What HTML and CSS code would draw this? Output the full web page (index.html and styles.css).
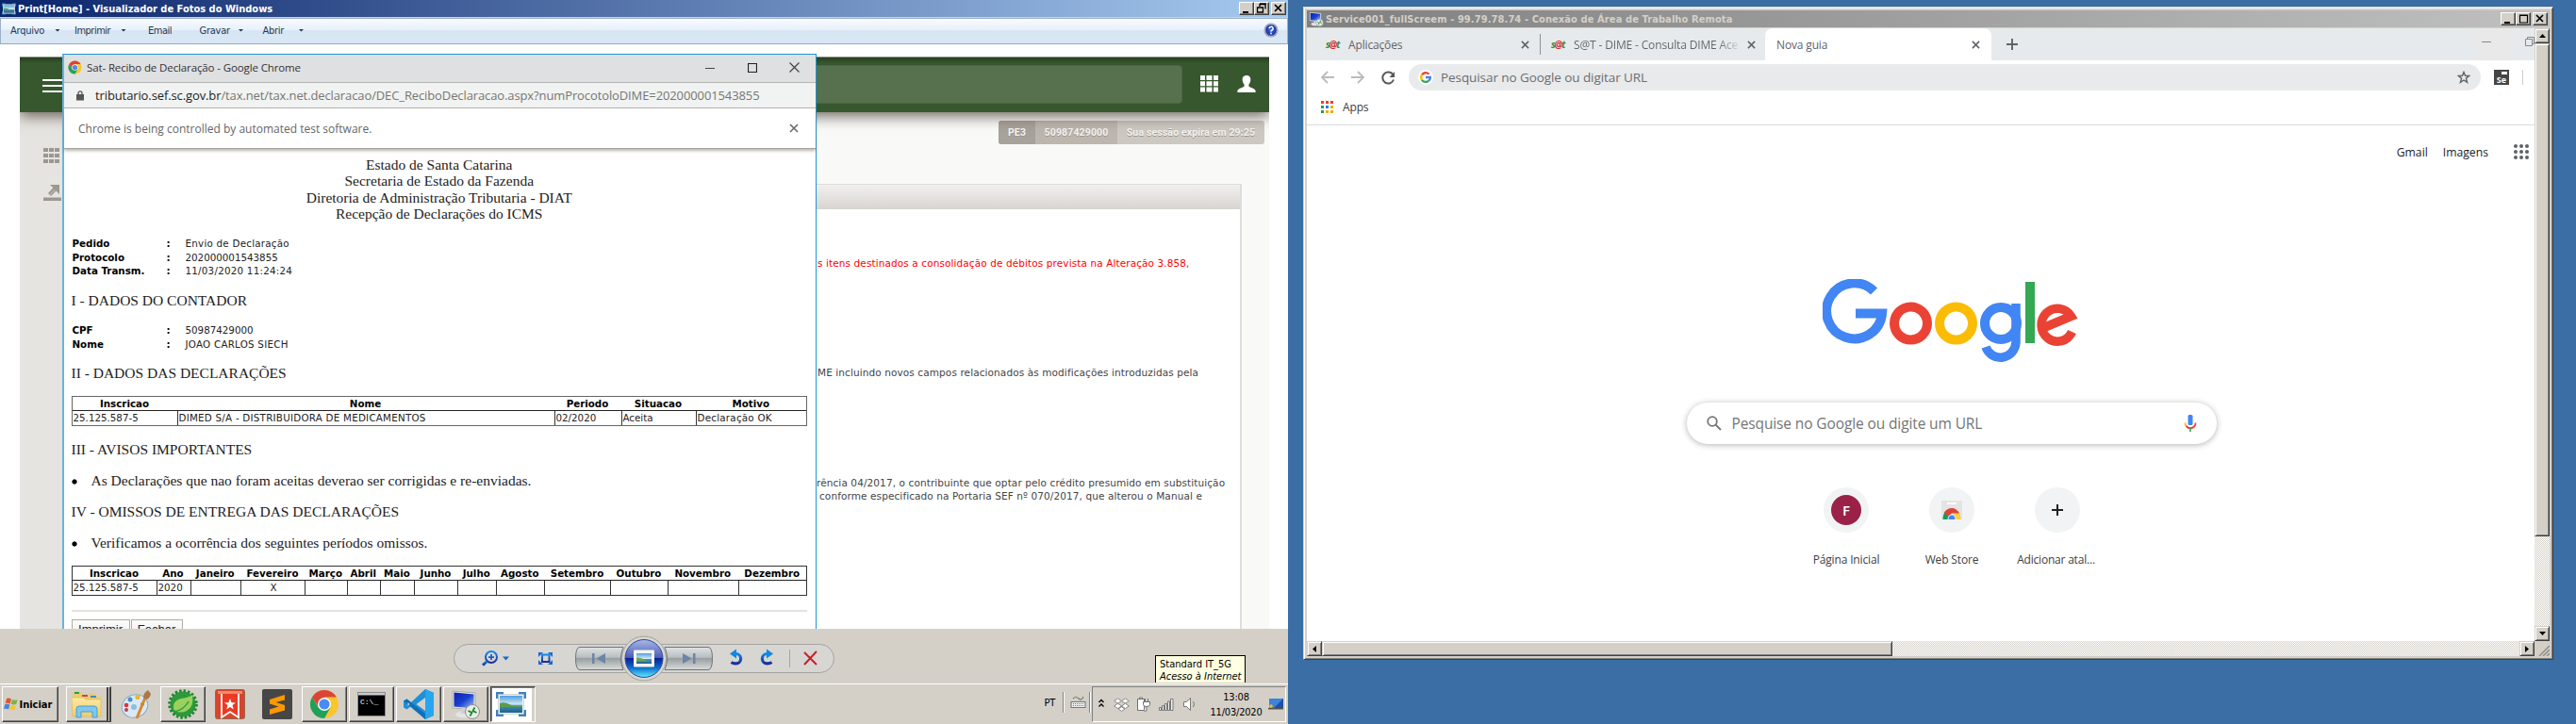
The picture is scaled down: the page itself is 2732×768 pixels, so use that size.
FILE: index.html
```html
<!DOCTYPE html>
<html lang="pt-BR">
<head>
<meta charset="utf-8">
<title>Desktop</title>
<link rel="stylesheet" href="styles.css">
</head>
<body>
<svg width="0" height="0" class="defs">
  <defs>
    <linearGradient id="screen" x1="0" y1="0" x2="1" y2="1"><stop offset="0" stop-color="#0a1fb0"/><stop offset=".5" stop-color="#1a3fd0"/><stop offset="1" stop-color="#9cc4f4"/></linearGradient>
    <linearGradient id="sky" x1="0" y1="0" x2="0" y2="1"><stop offset="0" stop-color="#4f9fe0"/><stop offset=".5" stop-color="#cfe8f6"/><stop offset=".6" stop-color="#3f8fb4"/><stop offset="1" stop-color="#1d5f93"/></linearGradient>
    <linearGradient id="folder" x1="0" y1="0" x2="0" y2="1"><stop offset="0" stop-color="#fbe9a0"/><stop offset="1" stop-color="#efcf6c"/></linearGradient>
    <linearGradient id="blueInk" x1="0" y1="0" x2="0" y2="1"><stop offset="0" stop-color="#1487e8"/><stop offset="1" stop-color="#1b2f9c"/></linearGradient>
    <radialGradient id="help"><stop offset="0" stop-color="#3f68e8"/><stop offset="1" stop-color="#16308f"/></radialGradient>
    <symbol id="chrome" viewBox="0 0 32 32">
      <circle cx="16" cy="16" r="15" fill="#fbc52d"/>
      <path d="M3 8.500A15 15 0 0 1 29 8.500H16L10 19.500Z" fill="#dc4437"/>
      <path d="M3 8.500A15 15 0 0 0 16 31L22.500 19.500H9.600Z" fill="#1fa15d"/>
      <circle cx="16" cy="16" r="7" fill="#fff"/><circle cx="16" cy="16" r="5.600" fill="#4a8af4"/>
    </symbol>
    <symbol id="rdp" viewBox="0 0 32 32">
      <path d="M2 2L26 4V22L2 20Z" fill="#e8e8ea" stroke="#aaa"/><path d="M3.500 3.500L24.500 5.500V20.500L3.500 18.500Z" fill="url(#screen)"/>
      <ellipse cx="14" cy="27" rx="9" ry="3.500" fill="#e4e4e6"/><path d="M11 20h6v6h-6z" fill="#d0d0d2"/>
      <circle cx="23" cy="24" r="7.500" fill="#e9ece9" stroke="#8d8d8d"/><path d="M18.500 23l4 2-2 3.500M27.500 25l-4-2 2-3.500" stroke="#178a2a" stroke-width="1.800" fill="none"/>
    </symbol>
    <symbol id="photo" viewBox="0 0 32 26">
      <path d="M1.500 7V1.500H8M24 1.500h6.500V7M30.500 19v5.500H24M8 24.500H1.500V19" fill="none" stroke="#3b83c0" stroke-width="3"/>
      <rect x="2.500" y="2.500" width="27" height="21" fill="#f2f2f0" stroke="#bbb" stroke-width=".6"/><rect x="4" y="4" width="24" height="18" fill="url(#sky)"/><path d="M4 12q5-2 10 1t14 2v1H4z" fill="#5d9a4a"/>
    </symbol>
    <symbol id="x" viewBox="0 0 10 10"><path d="M1 1L9 9M9 1L1 9" stroke="currentColor" stroke-width="1.700"/></symbol>
  </defs>
</svg>

<main class="desktop">
  <section class="screen-left">
    <header class="title-bar">
      <svg class="title-icon" width="15" height="13"><use href="#photo"/></svg>
      <span class="f-title">Print[Home] - Visualizador de Fotos do Windows</span>
      <div class="caption-buttons">
        <i class="cap"><svg width="14" height="12"><path d="M3 9h6v2H3z"/></svg></i>
        <i class="cap"><svg width="14" height="12"><path d="M5 1.500h6v5M5 1v3M2.500 5h6v5h-6zM2 5h7M5 1h7" fill="none" stroke="#000" stroke-width="1.300"/></svg></i>
        <i class="cap cap-gap"><svg width="14" height="12"><path d="M3 2l7 7M10 2L3 9" stroke="#000" stroke-width="1.700"/></svg></i>
      </div>
    </header>
    <nav class="viewer-menu">
      <span class="menu-item mi1"><b class="f-menu">Arquivo</b><i class="caret"></i></span>
      <span class="menu-item mi2"><b class="f-menu tight">Imprimir</b><i class="caret"></i></span>
      <span class="menu-item mi3"><b class="f-menu tight">Email</b></span>
      <span class="menu-item mi4"><b class="f-menu">Gravar</b><i class="caret"></i></span>
      <span class="menu-item mi5"><b class="f-menu">Abrir</b><i class="caret"></i></span>
      <svg class="help" width="16" height="16"><circle cx="8" cy="8" r="7.500" fill="#8d94a8"/><circle cx="8" cy="8" r="6.300" fill="url(#help)" stroke="#d6dbe8" stroke-width=".8"/><path d="M6 6.300a2.100 1.900 0 1 1 3 1.700q-1 .5-1 1.400" fill="none" stroke="#fff" stroke-width="1.500"/><circle cx="8" cy="11.500" r=".9" fill="#fff"/></svg>
    </nav>

    <div class="photo">
      <div class="page">
        <div class="green-bar">
          <i class="burger"></i>
          <i class="green-search"></i>
          <svg class="apps-white" width="20" height="18" fill="#fff"><path d="M0 0h5v5H0zM6.500 0h6v5h-6zM14 0h5v5h-5zM0 6.300h5v5H0zM6.500 6.300h6v5h-6zM14 6.300h5v5h-5zM0 12.600h5v5H0zM6.500 12.600h6v5h-6zM14 12.600h5v5h-5z"/></svg>
          <svg class="user-white" width="20" height="18" fill="#fff"><path d="M10 0c3.200 0 4.600 2.200 4.300 5-.2 2-1 3.600-1.900 4.700v1.700c1 1.300 6.900 2.300 7.200 4.800V18H.4v-1.800c.3-2.500 6.200-3.500 7.200-4.800V9.700C6.700 8.600 5.900 7 5.700 5 5.400 2.200 6.800 0 10 0z"/></svg>
        </div>
        <div class="page-body">
          <aside class="rail">
            <svg width="18" height="17" fill="#9c9790"><path d="M0 0h5v4H0zM6 0h5v4H6zM12 0h5v4h-5zM0 6h5v4H0zM6 6h5v4H6zM12 6h5v4h-5zM0 12h5v4H0zM6 12h5v4H6zM12 12h5v4h-5z"/></svg>
            <svg width="19" height="18" fill="#9c9790"><path d="M0 13.500h19V17H0zM7 0h10v10l-3.300-3.300L8 12 5 9l5.300-5.700z"/><path d="M6 12L12 5M8 13L14 6" stroke="#e6e4e0" stroke-width=".6"/></svg>
          </aside>
          <div class="page-main">
            <div class="session"><span class="s1"><b class="f-sess">PE3</b></span><span class="s2"><b class="f-sess">50987429000</b></span><span class="s3"><b class="f-sess">Sua sessão expira em 29:25</b></span></div>
            <div class="panel">
              <div class="panel-head"></div>
              <p class="note red"><span class="f-note">s itens destinados a consolidação de débitos prevista na Alteração 3.858,</span></p>
              <p class="note n2"><span class="f-note">ME incluindo novos campos relacionados às modificações introduzidas pela</span></p>
              <p class="note n3"><span class="f-note">rência 04/2017, o contribuinte que optar pelo crédito presumido em substituição</span></p>
              <p class="note n4"><span class="f-note">conforme especificado na Portaria SEF nº 070/2017, que alterou o Manual e</span></p>
            </div>
          </div>
        </div>
      </div>

      <article class="popup">
        <header class="popup-title">
          <svg width="15" height="15"><use href="#chrome"/></svg>
          <span class="f-pop">Sat- Recibo de Declaração - Google Chrome</span>
          <svg class="pop-min" width="10" height="10"><path d="M0 5.500h10" stroke="#444"/></svg>
          <svg class="pop-max" width="10" height="10"><path d="M.5.500h9v9h-9z" fill="none" stroke="#222" stroke-width="1.200"/></svg>
          <svg class="pop-close" width="11" height="11" viewBox="0 0 11 11"><path d="M.5.500l10 10M10.500.500l-10 10" stroke="#444" stroke-width="1.200"/></svg>
        </header>
        <div class="popup-url">
          <svg width="9" height="11"><path d="M0 4h8v6.500H0z" fill="#555"/><path d="M2 4.500V2.800a2 2 0 0 1 4 0v1.700" fill="none" stroke="#555" stroke-width="1.300"/></svg>
          <span class="f-url"><b>tributario.sef.sc.gov.br</b>/tax.net/tax.net.declaracao/DEC_ReciboDeclaracao.aspx?numProcotoloDIME=202000001543855</span>
        </div>
        <div class="popup-info"><span class="f-info">Chrome is being controlled by automated test software.</span><svg width="10" height="10" color="#6b6b66"><use href="#x"/></svg></div>
        <div class="receipt">
          <div class="r-head">Estado de Santa Catarina<br>Secretaria de Estado da Fazenda<br>Diretoria de Administração Tributaria - DIAT<br>Recepção de Declarações do ICMS</div>
          <dl class="r-info">
            <dt>Pedido</dt><dd>:</dd><dd class="word">Envio de Declaração</dd>
            <dt>Protocolo</dt><dd>:</dd><dd>202000001543855</dd>
            <dt>Data Transm.</dt><dd>:</dd><dd class="word">11/03/2020 11:24:24</dd>
          </dl>
          <h2>I - DADOS DO CONTADOR</h2>
          <dl class="r-info">
            <dt>CPF</dt><dd>:</dd><dd>50987429000</dd>
            <dt>Nome</dt><dd>:</dd><dd class="word">JOAO CARLOS SIECH</dd>
          </dl>
          <h2>II - DADOS DAS DECLARAÇÕES</h2>
          <div class="grid-table t1">
            <b>Inscricao</b><b>Nome</b><b>Periodo</b><b>Situacao</b><b>Motivo</b>
            <span>25.125.587-5</span><span class="word">DIMED S/A - DISTRIBUIDORA DE MEDICAMENTOS</span><span>02/2020</span><span>Aceita</span><span class="word">Declaração OK</span>
          </div>
          <h2 class="h-iii">III - AVISOS IMPORTANTES</h2>
          <p class="bullet">As Declarações que nao foram aceitas deverao ser corrigidas e re-enviadas.</p>
          <h2>IV - OMISSOS DE ENTREGA DAS DECLARAÇÕES</h2>
          <p class="bullet">Verificamos a ocorrência dos seguintes períodos omissos.</p>
          <div class="grid-table t2">
            <b>Inscricao</b><b>Ano</b><b>Janeiro</b><b>Fevereiro</b><b>Março</b><b>Abril</b><b>Maio</b><b>Junho</b><b>Julho</b><b>Agosto</b><b>Setembro</b><b>Outubro</b><b>Novembro</b><b>Dezembro</b>
            <span>25.125.587-5</span><span>2020</span><span></span><span class="mid">X</span><span></span><span></span><span></span><span></span><span></span><span></span><span></span><span></span><span></span><span></span>
          </div>
          <div class="rule"></div>
          <div class="buttons"><span class="btn b1">Imprimir</span><span class="btn b2">Fechar</span></div>
        </div>
      </article>
    </div>

    <div class="controls">
      <svg width="406" height="50" viewBox="480 673 406 50">
        <defs>
          <linearGradient id="nav" x1="0" y1="0" x2="0" y2="1"><stop offset="0" stop-color="#dfe2e2"/><stop offset=".45" stop-color="#b9bec0"/><stop offset=".5" stop-color="#999fa2"/><stop offset="1" stop-color="#d9dcdb"/></linearGradient>
          <linearGradient id="orb" x1="0" y1="0" x2="0" y2="1"><stop offset="0" stop-color="#a9b9e6"/><stop offset=".48" stop-color="#4a5cb8"/><stop offset=".5" stop-color="#0a1f96"/><stop offset=".75" stop-color="#0c6fcf"/><stop offset="1" stop-color="#5ff0ff"/></linearGradient>
        </defs>
        <rect x="481.500" y="683.500" width="403" height="30" rx="15" fill="#d7d6d2" stroke="#a3a3a1"/>
        <circle cx="683" cy="698.500" r="23.500" fill="#d7d6d2" stroke="#a3a3a1"/>
        <path d="M615 686.500h46q-5 12 0 24h-46q-4.500 0-4.500-12t4.500-12zM751 686.500h-46q5 12 0 24h46q4.500 0 4.500-12t-4.500-12z" fill="url(#nav)" stroke="#6f7476"/>
        <circle cx="683" cy="698.500" r="20" fill="url(#orb)" stroke="#33479c"/>
        <rect x="672" y="689.500" width="22" height="18" rx="1" fill="#f6f3f0"/><rect x="675" y="693" width="16" height="11" fill="url(#sky)"/><path d="M675 697.500q4-.5 8 2t8 1v1h-16z" fill="#6ea35c"/>
        <path d="M628 693h2.500v11H628zM642 693v11l-9.500-5.500zM737.500 693h-2.500v11h2.500zM724 693v11l9.500-5.500z" fill="#6b84a8"/>
        <g stroke="url(#blueInk)" fill="none" stroke-width="2"><circle cx="521" cy="697" r="6"/><path d="M518 697.100h6M521 694v6" stroke="#1a5ec4" stroke-width="1.800"/><path d="M516.500 701.500l-4.500 4" stroke-width="3"/>
        <path d="M575 694.500h7.500v7.500H575z"/></g>
        <path d="M571 697v-5h5l-1.500 1.500-2 2zM586 697v-5h-5l1.500 1.500 2 2zM571 700v5h5l-1.500-1.500-2-2zM586 700v5h-5l1.500-1.500 2-2z" fill="#2168cc"/>
        <path d="M533 696.500h7l-3.500 4z" fill="#1c64c8"/>
        <path d="M779 693.500h1.500a5 5 0 0 1 0 10.300q-3 .1-5-1.300" stroke="url(#blueInk)" stroke-width="3.200" fill="none"/><path d="M774 693.500l7-5v10z" fill="#1487e0"/>
        <path d="M815 693.500h-1.500a5 5 0 0 0 0 10.300q3 .1 5-1.300" stroke="url(#blueInk)" stroke-width="3.200" fill="none"/><path d="M820 693.500l-7-5v10z" fill="#1487e0"/>
        <path d="M837.500 689v19" stroke="#a6a6a4"/>
        <path d="M853 692l13 13M866 691l-13 14" stroke="#c8202c" stroke-width="2"/>
      </svg>
    </div>

    <footer class="taskbar">
      <div class="start"><svg width="16" height="14" viewBox="0 0 16 14"><path d="M3 1q2.500-1 5 .5L6.700 6.500q-2.500-1.500-5-.4z" fill="#e5562a"/><path d="M9 2q2.700 1.300 5.600.2L13.200 7q-3 1-5.500-.3z" fill="#78b63c"/><path d="M1.400 7.100q2.500-1 5 .5L5 12.500q-2.400-1.400-5-.4z" fill="#4a83d8"/><path d="M7.400 8q2.700 1.300 5.500.2L11.500 13q-3 1-5.500-.4z" fill="#f7c432"/></svg><b class="f-start">Iniciar</b></div>
      <div class="task up stack"><svg width="32" height="30" viewBox="0 0 32 30"><path d="M1 5V2h9l2 3h6V3h8l1 4h4v20H1z" fill="#e9cd73"/><path d="M3 2h5v2H3z" fill="#2a9e3c"/><path d="M11 5h6v2h-6z" fill="#d8423a"/><path d="M20 6h6v2h-6z" fill="#3a8cd0"/><path d="M0 8h13l2 2h16v18H1z" fill="url(#folder)" stroke="#d6b555" stroke-width=".6"/><path d="M5 29v-9q0-3 3-3h16q3 0 3 3v9h-5v-6H10v6z" fill="#7fc7ec" stroke="#4b9fd0"/></svg></div>
      <div class="task"><svg width="32" height="32"><ellipse cx="15" cy="18" rx="14" ry="12" fill="#d9e8f4" stroke="#8aa9c4" transform="rotate(-20 15 18)"/><circle cx="6" cy="17" r="2.300" fill="#d33"/><circle cx="10" cy="11" r="2.500" fill="#4b8ed0"/><circle cx="18" cy="8.500" r="2.600" fill="#e8b735"/><circle cx="6" cy="22" r="2" fill="#c2413a"/><circle cx="14" cy="19" r="3" fill="#8bbde4"/><circle cx="23" cy="16" r="2" fill="#54a24a"/><path d="M17 31L26 9" stroke="#d9862e" stroke-width="3"/><path d="M24 9q0-5 5-8l3 4q-1 5-5 6z" fill="#a97845"/></svg></div>
      <div class="task up"><svg width="32" height="32"><circle cx="16" cy="16" r="13.500" fill="#2c9a3b"/><circle cx="16" cy="16" r="14.300" fill="none" stroke="#238432" stroke-width="3" stroke-dasharray="2.500 2"/><path d="M6 21q-1-9 8-11 8-1 12-4 2 13-6 17-7 3-12 0z" fill="#9bd05c"/><path d="M7 24q10-2 15-11" stroke="#2c9a3b" stroke-width="1.500" fill="none"/></svg></div>
      <div class="task"><svg width="32" height="32"><rect x=".5" y=".5" width="31" height="31" rx="2" fill="#d9452b" stroke="#8e6a50"/><path d="M3 2h26v3H3z" fill="#f08a68"/><path d="M7 5h18v25l-9-6-9 6z" fill="#ea3a25"/><path d="M7 5v25l9-6 9 6V5" fill="none" stroke="#fff" stroke-width="1.800"/><path d="M16 10l1.600 4.200 4.400.2-3.500 2.700 1.200 4.300-3.700-2.500-3.700 2.500 1.200-4.300-3.500-2.700 4.400-.2z" fill="#fff"/></svg></div>
      <div class="task"><svg width="32" height="32"><rect width="32" height="32" rx="2" fill="#464646"/><path d="M8 11l16-5v5.500L14.500 14 24 17v5.500L8 27v-5.500l9.500-3L8 15.500z" fill="#ff9800"/></svg></div>
      <div class="task up"><svg width="32" height="32"><use href="#chrome"/></svg></div>
      <div class="task up"><svg class="cmd" width="30" height="26"><rect x=".5" y=".5" width="29" height="25" fill="#000" stroke="#8a8a8a"/><rect x="1" y="1" width="28" height="2.500" fill="#c8ccd2"/><text x="3" y="13" class="cmd-text">C:\_</text></svg></div>
      <div class="task up"><svg width="32" height="32"><path d="M23 0l9 4v24l-9 4L8 18 3.500 21.500 0 19.500V12.500L3.500 10.500 8 14z" fill="#1f8fd6"/><path d="M23 9v14l-9.500-7z" fill="#d4d0c8"/><path d="M0 12.500L3.500 10.500 23 26v6z" fill="#0f6fb8"/><path d="M23 0l9 4v24l-9 4z" fill="#27a5ee"/><path d="M4.500 14v4l2-2z" fill="#d4d0c8"/></svg></div>
      <div class="task up"><svg width="32" height="32"><use href="#rdp"/></svg></div>
      <div class="task down stack"><svg width="32" height="26"><use href="#photo"/></svg></div>

      <div class="tray-left"><span class="f-menu">PT</span><i class="vr"></i>
        <svg width="17" height="16" fill="none" stroke="#777" stroke-width="1.100"><path d="M1 7.500h15v6H1z" fill="#eee"/><path d="M3 9.500h11M3 11.500h11" stroke-dasharray="1 1"/><path d="M3 4q3-3 6 0t5-2"/></svg><i class="vr"></i></div>
      <div class="tray">
        <svg class="chev" width="6" height="10" fill="none" stroke="#000" stroke-width="1.300"><path d="M.5 4L3 1.500 5.500 4M.5 8.500L3 6l2.500 2.500"/></svg>
        <svg width="17" height="15" fill="#fff" stroke="#888" stroke-width="1"><path d="M4.500 1L8.500 3.500 4.500 6.200.7 3.500zM12.500 1l3.800 2.500-3.800 2.700-4-2.700zM4.500 6.200L8.500 9 4.500 11.500.7 9zM12.500 6.200L16.300 9l-3.800 2.500-4-2.500zM5 12l3.500-2.200L12 12l-3.500 2.400z"/></svg>
        <svg class="plug" width="16" height="16" fill="#fff" stroke="#6f6f6f"><path d="M1.500 2.500h7v12h-7zM3.500 1h3v1.500h-3z"/><path d="M7.500 5.500h7v3q0 2-3.500 2t-3.500-2zM9.500 5V2M12.500 5V2M11 10.500V15H8"/></svg>
        <svg class="bars" width="16" height="13" fill="#f4f4f4" stroke="#777"><path d="M.5 9.500h2v3h-2zM3.500 7.500h2v5h-2zM6.500 5.500h2v7h-2zM9.500 3h2v9.500h-2zM12.500.5h2.500v12h-2.500z"/></svg>
        <svg class="vol" width="15" height="16" fill="#fff" stroke="#777"><path d="M1.500 5.500h3l4-4v13l-4-4h-3z"/><path d="M11.500 5q2 3 0 6" fill="none"/></svg>
        <div class="clock"><span class="f-clock">13:08</span><span class="f-clock">11/03/2020</span></div>
        <svg width="16" height="14"><rect x="1" y="1" width="15" height="10" fill="#1e50a8"/><path d="M1 1h15L6 11H1z" fill="#3d83dc"/><path d="M0 11h16v1.500H0z" fill="#555"/><circle cx="3" cy="9" r="1.800" fill="#f0c030"/></svg>
      </div>
    </footer>
    <div class="tip"><span class="f-tip">Standard IT_5G</span><i class="f-tip">Acesso à Internet</i></div>
  </section>

  <section class="remote">
    <header class="remote-title">
      <svg width="16" height="16"><use href="#rdp"/></svg>
      <span class="f-rtitle">Service001_fullScreem - 99.79.78.74 - Conexão de Área de Trabalho Remota</span>
      <div class="caption-buttons">
        <i class="cap"><svg width="14" height="12"><path d="M3 9h6v2H3z"/></svg></i>
        <i class="cap"><svg width="14" height="12"><path d="M3.500 2h8v8h-8zM3 2.500h9" fill="none" stroke="#000" stroke-width="1.200"/></svg></i>
        <i class="cap cap-gap"><svg width="14" height="12"><path d="M3 2l7 7M10 2L3 9" stroke="#000" stroke-width="1.700"/></svg></i>
      </div>
    </header>
    <div class="remote-body">
      <div class="browser">
        <div class="tabs">
          <div class="tab ta"><span class="sat">s<em>@</em>t</span><span class="f-tab">Aplicações</span><svg width="9" height="9" color="#5f6368"><use href="#x"/></svg></div>
          <div class="tab tb"><span class="sat">s<em>@</em>t</span><span class="f-tab fade">S@T - DIME - Consulta DIME Ace</span><svg width="9" height="9" color="#5f6368"><use href="#x"/></svg></div>
          <div class="tab tc"><span class="f-tab">Nova guia</span><svg width="9" height="9" color="#5f6368"><use href="#x"/></svg></div>
          <svg class="new-tab" width="12" height="12"><path d="M6 0v12M0 6h12" stroke="#5f6368" stroke-width="1.900"/></svg>
          <div class="min-zone"><i></i></div>
          <svg class="restore" width="10" height="10" fill="none" stroke="#85888c"><path d="M.5 2.500h7v7h-7zM2.500 2.500v-2h7v7h-2"/></svg>
        </div>
        <div class="toolbar">
          <svg class="nav-i" width="14" height="14" fill="none" stroke="#babcbe" stroke-width="1.800"><path d="M14 7H1M7 1L1 7l6 6"/></svg>
          <svg class="nav-i" width="14" height="14" fill="none" stroke="#babcbe" stroke-width="1.800"><path d="M0 7h13M7 1l6 6-6 6"/></svg>
          <svg class="nav-i" width="15" height="15" fill="none" stroke="#55585c" stroke-width="2"><path d="M12.500 4.500A6 6 0 1 0 13 9.500"/><path d="M14 1v6H8.500z" fill="#55585c" stroke="none"/></svg>
          <div class="omni"><svg width="16" height="16" viewBox="0 0 16 16" fill="none" stroke-width="2.300"><circle cx="8" cy="8" r="8" fill="#fff"/><path d="M4 5.400A4.800 4.800 0 0 1 11.500 4.700" stroke="#ea4335"/><path d="M4.100 5.200a4.900 4.900 0 0 0 0 5.700" stroke="#fbbc05"/><path d="M4 10.800a4.800 4.800 0 0 0 7.200.9" stroke="#34a853"/><path d="M8 8h4.900q0 2.300-1.600 3.700" stroke="#4285f4"/></svg>
            <span class="f-omni">Pesquisar no Google ou digitar URL</span>
            <svg class="star" width="14" height="14" fill="none" stroke="#5f6368" stroke-width="1.400"><path d="M7 1.500l1.500 3.800 4.200.2-3.300 2.600 1.200 4.200L7 10l-3.600 2.300 1.200-4.200L1.300 5.500l4.200-.2z"/></svg></div>
          <div class="se"><i></i>Se</div>
          <i class="tool-div"></i>
        </div>
        <div class="bookmarks"><svg width="13" height="13"><path d="M0 0h3v3H0zM5 0h3v3H5zM10 0h3v3h-3z" fill="#f23a2f"/><path d="M0 5h3v3H0z" fill="#2c9a4b"/><path d="M5 5h3v3H5z" fill="#1f82f0"/><path d="M10 5h3v3h-3zM5 10h3v3H5zM10 10h3v3h-3z" fill="#f7a90a"/><path d="M0 10h3v3H0z" fill="#2c9a4b"/></svg><span class="f-tab dark">Apps</span></div>
        <div class="ntp">
          <div class="ntp-top"><span class="f-gm">Gmail</span><span class="f-gm">Imagens</span>
            <svg width="16" height="16" fill="#5f6368"><circle cx="2" cy="2" r="2"/><circle cx="8" cy="2" r="2"/><circle cx="14" cy="2" r="2"/><circle cx="2" cy="8" r="2"/><circle cx="8" cy="8" r="2"/><circle cx="14" cy="8" r="2"/><circle cx="2" cy="14" r="2"/><circle cx="8" cy="14" r="2"/><circle cx="14" cy="14" r="2"/></svg></div>
          <svg class="logo" width="272" height="92" viewBox="0 0 272 92" fill="none" stroke-width="10" role="img" aria-label="Google">
            <path d="M54.500 13A29.500 29.500 0 1 0 63 36.500H35" stroke="#4285f4" stroke-width="10"/>
            <circle cx="93.500" cy="47" r="17.500" stroke="#ea4335"/>
            <circle cx="141.500" cy="47" r="17.500" stroke="#fbbc05"/>
            <circle cx="189" cy="47" r="17" stroke="#4285f4"/>
            <path d="M205 26v41a16.500 17 0 0 1-32 5" stroke="#4285f4" stroke-width="9.500"/>
            <path d="M220 3v65" stroke="#34a853"/>
            <path d="M264.500 56A17 17.500 0 1 1 263.500 39.500L236 51" stroke="#ea4335" stroke-width="9.500"/>
          </svg>
          <div class="search"><svg width="16" height="16" fill="none" stroke="#757575" stroke-width="1.800"><circle cx="6" cy="6" r="4.800"/><path d="M9.500 9.500l5.500 5.500"/></svg><span class="f-search">Pesquise no Google ou digite um URL</span>
            <svg width="14" height="18" viewBox="0 0 14 18"><rect x="4.500" y="0" width="5" height="11" rx="1.500" fill="#4285f4"/><path d="M1.500 8.500Q1.500 11 3 12.500" stroke="#fbbc05" stroke-width="1.800" fill="none"/><path d="M2.500 12q4.500 4.500 9 0 1-1.300 1-3.500" stroke="#ea4335" stroke-width="1.800" fill="none"/><path d="M7 14v4" stroke="#34a853" stroke-width="1.600"/></svg></div>
          <div class="tiles">
            <div class="tile"><i><b>F</b></i><span class="f-tile">Página Inicial</span></div>
            <div class="tile"><i><svg width="22" height="22"><path d="M0 1h22v20H0z" fill="#e4e4e4"/><path d="M6 4h10" stroke="#fff" stroke-width="2"/><path d="M1.500 21a9.500 12 0 0 1 3-9l6.500 5v4z" fill="#0f9d58"/><path d="M20.500 21q0-6-3-9L11 17v4z" fill="#ffcd40"/><path d="M3 13.500Q6 9 11 9t8 5.500h-8L7 18z" fill="#db4437"/><path d="M6.500 21a4.500 5.500 0 0 1 9 0z" fill="#f1f1f1"/><path d="M7.500 21a3.500 4.500 0 0 1 7 0z" fill="#4285f4"/></svg></i><span class="f-tile">Web Store</span></div>
            <div class="tile"><i><svg width="12" height="12"><path d="M6 0v12M0 6h12" stroke="#202124" stroke-width="2"/></svg></i><span class="f-tile add">Adicionar atal...</span></div>
          </div>
        </div>
      </div>
      <div class="vscroll"><i class="sb"><svg width="7" height="4"><path d="M0 4h7L3.500 0z"/></svg></i><i class="vthumb"></i><i class="sb end"><svg width="7" height="4"><path d="M0 0h7L3.500 4z"/></svg></i></div>
      <div class="hscroll"><i class="sb"><svg width="4" height="7"><path d="M4 0v7L0 3.500z"/></svg></i><i class="hthumb"></i><i class="sb end"><svg width="4" height="7"><path d="M0 0v7l4-3.500z"/></svg></i></div>
      <svg class="grip" width="16" height="16" stroke="#8a867e" stroke-width="1.300"><path d="M5 16L16 5M9 16l7-7M13 16l3-3"/></svg>
    </div>
  </section>
</main>
</body>
</html>
```
FILE: styles.css
```css
* { box-sizing: border-box; }
body { margin: 0; background: #3a6ea5; font-family: "DejaVu Sans Condensed", "DejaVu Sans", sans-serif; font-size: 11px; color: #000; }
i, em { font-style: normal; }
span, b { white-space: pre; }
svg { flex: none; display: block; }
.defs { position: absolute; }
.desktop { position: relative; width: 2732px; height: 768px; overflow: hidden; }

/* type styles */
.f-title, .f-rtitle, .f-start { font: bold 11px "DejaVu Sans Condensed", "DejaVu Sans", sans-serif; }
.f-rtitle { letter-spacing: .1px; }
.f-menu, .f-clock, .f-tip { font: 11px "DejaVu Sans Condensed", "DejaVu Sans", sans-serif; }
.f-menu { letter-spacing: -.25px; }
.tight { letter-spacing: -.5px; }
.f-clock { letter-spacing: -.2px; }
.f-tip { letter-spacing: 0; }
.f-note { font: 10.500px "DejaVu Sans", sans-serif; letter-spacing: .1px; }
.f-sess { font: bold 10.500px Roboto, sans-serif; letter-spacing: .15px; }
.f-pop { font: 11.500px "Open Sans", sans-serif; letter-spacing: -.12px; }
.f-url { font: 13px "Open Sans", sans-serif; letter-spacing: -.11px; }
.f-info { font: 12px "Open Sans", sans-serif; }
.f-tab, .f-tile { font: 12px "Open Sans", sans-serif; letter-spacing: -.15px; }
.f-omni { font: 13.500px "Open Sans", sans-serif; letter-spacing: -.08px; }
.f-gm { font: 12.200px "Open Sans", sans-serif; }
.f-search { font: 15.500px "Open Sans", sans-serif; letter-spacing: -.12px; }

/* left monitor */
.screen-left { position: relative; display: flex; flex-direction: column; width: 1366px; height: 768px; background: #d4d0c8; }
.title-bar { display: flex; align-items: center; height: 18px; padding-left: 2px; background: linear-gradient(90deg, #0a246a, #a6caf0); color: #fff; }
.title-icon { margin-right: 2px; }
.caption-buttons { display: flex; margin-left: auto; padding-right: 2px; }
.cap { width: 16px; height: 14px; background: #d4d0c8; border: 1px solid; border-color: #fff #404040 #404040 #fff; box-shadow: inset -1px -1px #808080; }
.cap-gap { margin-left: 2px; }
.viewer-menu { display: flex; align-items: center; height: 28px; margin-top: 1px; padding: 0 9px 2px 0; border: 1px solid #9db0c8; border-bottom: 1px solid #8fa9c6; background: linear-gradient(#f8fbff 0, #e6f0fa 12px, #d8e5f3 12px, #dae7f5 100%); color: #1e395b; }
.menu-item { display: flex; align-items: center; justify-content: space-between; }
.menu-item b { font-weight: normal; }
.caret { width: 6px; height: 3px; background: #1e395b; clip-path: polygon(0 0, 100% 0, 50% 100%); }
.mi1 { width: 53px; margin-left: 10px; }
.mi2 { width: 55px; margin-left: 15px; }
.mi3 { width: 25px; margin-left: 23px; }
.mi4 { width: 47px; margin-left: 29.500px; }
.mi5 { width: 44px; margin-left: 20px; }
.help { margin-left: auto; margin-top: -1px; }

.photo { position: relative; height: 620px; overflow: hidden; background: #fff; padding: 13px 20px 0 21px; }
.page { height: 100%; display: flex; flex-direction: column; background: #f9f9f7; }
.green-bar { position: relative; display: flex; align-items: center; height: 59px; border-top: 1px solid #8b8f84; background: linear-gradient(#29401f 0, #37572f 6px); box-shadow: 0 4px 14px rgba(60, 50, 40, .75); clip-path: inset(0 0 -30px 0); padding: 0 14px 0 24px; }
.burger { width: 24px; height: 14px; margin-top: 2px; border: solid #fff; border-width: 2px 0; background: linear-gradient(#fff, #fff) 0 4px / 100% 2px no-repeat; }
.green-search { height: 41px; flex: 1; margin-right: 19px; margin-bottom: 2px; border-radius: 4px; background: #57704d; border: 1px solid #4b6643; }
.apps-white { margin-bottom: 2px; }
.user-white { margin: 0 0 2px 19px; }
.page-body { flex: 1; display: flex; }
.rail { width: 46px; background: #e6e4e0; padding: 38px 0 0 25px; display: flex; flex-direction: column; gap: 22px; }
.page-main { flex: 1; display: flex; flex-direction: column; align-items: flex-end; padding-top: 9px; }
.session { display: flex; height: 25px; margin-right: 5px; border-radius: 3px; overflow: hidden; background: #cdc8c2; color: #f5f3f0; line-height: 25px; }
.session span { display: flex; align-items: center; justify-content: center; text-shadow: 0 1px #9b958e; }
.s1 { width: 39px; background: #a7a29b; }
.s2 { width: 87px; background: #bdb6af; }
.s3 { width: 156px; }
.panel { flex: 1; width: 800px; margin: 42px 29px 0 0; border: 1px solid #deddd9; border-width: 1px 2px 0; background: #fff; padding-left: 348px; }
.panel-head { height: 26px; margin-left: -348px; background: linear-gradient(#f1f0ee, #d8d5d0); }
.note { margin: 0; height: 15px; line-height: 15px; color: #444; white-space: nowrap; }
.red { margin-top: 50px; color: #f00; }
.n2 { margin-top: 101px; }
.n3 { margin: 102px 0 0 -1px; height: 14px; }
.n4 { padding-left: 2px; }

/* pop-up browser window */
.popup { position: absolute; z-index: 2; left: 66px; top: 10px; width: 800px; height: 625px; background: #fff; border: 1px solid #1c97d5; border-left: 2px solid #68b4de; }
.popup-title { display: flex; align-items: center; height: 30px; background: #dfe0e2; border-bottom: 1px solid #b5b5b3; padding: 0 17px 2px 4px; }
.popup-title span { margin-left: 5px; color: #333; }
.pop-min { margin-left: auto; }
.pop-max { margin-left: 35px; }
.pop-close { margin-left: 34px; }
.popup-url { display: flex; align-items: center; height: 27px; background: #f1f3f2; border-bottom: 1px solid #b5b5b3; padding-left: 13px; color: #77756f; }
.popup-url span { margin-left: 11px; }
.popup-url b { font-weight: normal; color: #222; }
.popup-info { display: flex; align-items: center; justify-content: space-between; height: 43px; padding: 0 18px 0 15px; color: #666; border-bottom: 1px solid #aaa49e; box-shadow: 0 2px 3px rgba(120, 110, 100, .5); }
.receipt { padding: 7.500px 9px 0 7.500px; font: 10.300px/14.650px "DejaVu Sans", sans-serif; color: #222; }
.r-head, h2, .bullet { font: 15.500px/17.500px "Liberation Serif", serif; }
.r-head { height: 70px; text-align: center; }
.r-info { display: grid; grid-template-columns: 100px 20px 1fr; grid-auto-rows: 14.650px; margin: 15.600px 0 0; padding-left: 1px; }
dd, dt { margin: 0; white-space: nowrap; }
.word { letter-spacing: .25px; }
dt, .r-info dd:nth-of-type(odd) { font-weight: bold; color: #000; }
h2 { margin: 14.600px 0 0; height: 18px; font-weight: normal; }
.h-iii { margin-top: 15.600px; }
.bullet { margin: 15.500px 0 0; height: 18px; padding-left: 21px; background: radial-gradient(circle, #000 2.200px, transparent 3px) 0 7px / 6px 6px no-repeat; }
.grid-table { display: grid; grid-template-rows: 15px 15px; margin-top: 15px; border: 1px solid #333; height: 32px; }
.grid-table b { color: #000; border-bottom: 1px solid #222; display: flex; justify-content: center; }
.grid-table span { border-left: 1px solid #333; padding-left: 1px; }
.grid-table span:nth-of-type(1) { border-left: 0; }
.grid-table .mid { text-align: center; }
.t1 { grid-template-columns: 111px 400px 71px 79px 1fr; border-color: #666; }
.t2 { grid-template-columns: 89px 36px 53.500px 68px 44.500px 35.500px 36px 46px 40.500px 51.500px 70px 61px 74.500px 1fr; }
.rule { height: 2px; margin-top: 15px; background: #e2e2de; }
.buttons { display: flex; gap: 1px; margin-top: 7.500px; }
.btn { height: 22px; display: flex; justify-content: center; font: 13px/19px "Liberation Sans", sans-serif; border: 1px solid #b0aca4; background: linear-gradient(#fbfbfb, #eee); }
.b1 { width: 62px; }
.b2 { width: 55px; }

.controls { height: 58px; padding: 6px 0 0 480px; }
.taskbar { display: flex; height: 43px; border-top: 1px solid #fff; padding: 2px 2px 0; }
.start { width: 60px; height: 38px; display: flex; align-items: center; border: 1px solid; border-color: #fff #404040 #404040 #fff; box-shadow: inset -1px -1px #808080; padding-left: 1px; margin-right: 8px; }
.start b { margin-left: .5px; }
.task { width: 48px; height: 38px; margin-right: 2px; display: flex; align-items: center; justify-content: center; border: 1px solid transparent; }
.up { border-color: #fff #404040 #404040 #fff; box-shadow: inset -1px -1px #808080; }
.up.stack { border-right-width: 2px; box-shadow: inset -1px 0 #d4d0c8, inset -3px 0 #404040, inset 0 -1px #808080; padding-right: 4px; }
.down { border-color: #404040 #fff #fff #404040; background: #fff; padding-right: 4px; box-shadow: inset 1px 1px #808080, inset -3px 0 #d4d0c8, inset -4px 0 #fff; }
.cmd-text { font: 8px "Liberation Mono", monospace; fill: #fff; }
.tray-left { display: flex; align-items: center; margin-left: auto; height: 34px; }
.vr { width: 2px; height: 22px; border-left: 1px solid #808080; border-right: 1px solid #fff; margin: 0 6px 0 8px; }
.tray-left .vr:last-child { margin: 0 1px 0 3px; }
.tray { display: flex; align-items: center; width: 206px; height: 38px; border: 1px solid; border-color: #808080 #fff #fff #808080; padding: 0 0 0 6px; }
.chev { margin: -3px 10px 0 0; }
.plug { margin-left: 7px; }
.bars { margin-left: 8px; }
.vol { margin-left: 9px; }
.clock { display: flex; flex-direction: column; align-items: center; width: 56px; margin: 0 6px 0 14px; gap: 3px; }
.tip { position: absolute; left: 1225px; top: 695px; width: 96px; height: 29px; display: flex; flex-direction: column; align-items: flex-start; padding: 2px 0 0 4px; border: 1px solid #000; border-bottom: 0; background: #ffffe1; overflow: hidden; }
.tip i { font-style: italic; }

/* remote desktop window */
.remote { position: absolute; left: 1382px; top: 7px; width: 1326px; height: 693px; background: #d4d0c8; border: 1px solid; border-color: #d4d0c8 #404040 #404040 #d4d0c8; box-shadow: inset 1px 1px #fff, inset -1px -1px #808080; padding: 3px; }
.remote-title { display: flex; align-items: center; height: 18px; padding-left: 2px; background: linear-gradient(90deg, #808080, #c0c0c0); color: #d4d0c8; }
.remote-title span { margin-left: 2px; }
.remote-body { display: grid; grid-template: 650px 16px / 1302px 16px; margin-top: 1px; }
.browser { background: #fff; font-family: "Open Sans", sans-serif; color: #5f6368; overflow: hidden; }
.tabs { display: flex; height: 34px; background: #e7eaed; }
.tab { display: flex; align-items: center; height: 34px; }
.tab svg { margin-left: auto; }
.ta { width: 248px; padding: 0 11px 0 20px; border: solid; border-width: 0 1px 0 0; border-image: linear-gradient(transparent 20%, #8c9094 20%, #8c9094 80%, transparent 80%) 1; }
.tb { width: 238px; padding: 0 10px 0 11px; }
.tc { width: 240px; padding: 0 12px; border-radius: 8px 8px 0 0; background: #fff; }
.sat { width: 16px; margin-right: 8px; font: italic bold 10px "Open Sans", sans-serif; letter-spacing: -1.200px; color: #3c8a3e; }
.sat em { color: #d8231f; font-style: normal; }
.fade { background: linear-gradient(90deg, #5f6368 88%, #cfd2d5); background-clip: text; -webkit-background-clip: text; color: transparent; }
.new-tab { margin: 11px 0 0 16px; }
.min-zone { width: 40px; margin-left: auto; background: #e9e9e9; padding: 14px 0 0 6px; }
.min-zone i { display: block; width: 10px; height: 1px; background: #85888c; }
.restore { margin: 9px 0 0 12px; }
.toolbar { display: flex; align-items: center; height: 36px; padding-left: 15px; }
.nav-i { margin-right: 18px; }
.omni { display: flex; align-items: center; width: 1137px; height: 28px; margin-left: -4px; padding: 0 11px 0 10px; border-radius: 14px; background: #e9eaeb; color: #6a6d71; }
.omni span { margin-left: 8px; }
.star { margin-left: auto; }
.se { position: relative; width: 16px; height: 16px; margin-left: 14px; background: #454545; color: #fff; font: bold 9px/22px "Open Sans", sans-serif; text-align: center; }
.se i { position: absolute; right: 2px; top: 2px; width: 6px; height: 3px; background: #fff; }
.tool-div { width: 1px; height: 16px; margin-left: 14px; background: #ccc; }
.bookmarks { display: flex; align-items: center; height: 33px; padding: 0 0 6px 15px; gap: 10px; border-bottom: 1px solid #dadce0; }
.dark { color: #3c4043; }
.ntp { display: flex; flex-direction: column; align-items: center; }
.ntp-top { align-self: stretch; display: flex; align-items: center; justify-content: flex-end; height: 56px; padding-right: 6px; color: #222; gap: 16px; }
.ntp-top svg { margin-left: 11px; }
.logo { margin: 107px 0 0 63px; }
.search { display: flex; align-items: center; width: 562px; height: 44px; margin: 39px 0 0 65px; border-radius: 22px; background: #fff; box-shadow: 0 1px 6px rgba(32, 33, 36, .35); padding: 0 21px; color: #757575; }
.search span { margin-left: 11px; }
.search svg:last-child { margin-left: auto; }
.tiles { display: flex; margin: 46px 0 0 66px; }
.tile { width: 112px; display: flex; flex-direction: column; align-items: center; color: #3c4043; }
.tile i { width: 48px; height: 48px; border-radius: 50%; background: #f1f3f4; display: flex; align-items: center; justify-content: center; margin-bottom: 20px; }
.tile i b { width: 32px; height: 32px; border-radius: 50%; background: #9a2148; color: #fff; font: 600 15px/32px "Open Sans", sans-serif; text-align: center; }
.add { padding-right: 3px; letter-spacing: -.2px; }
.vscroll, .hscroll { display: flex; background: repeating-conic-gradient(#d4d0c8 0 25%, #fff 0 50%) 0 0 / 2px 2px; }
.vscroll { flex-direction: column; }
.sb, .vthumb, .hthumb { background: #d4d0c8; border: 1px solid; border-color: #d4d0c8 #404040 #404040 #d4d0c8; box-shadow: inset 1px 1px #fff, inset -1px -1px #808080; }
.sb { width: 16px; height: 16px; display: flex; align-items: center; justify-content: center; }
.vthumb { height: 523px; }
.hthumb { width: 605px; }
.end { margin-top: auto; }
.hscroll .end { margin: 0 0 0 auto; }
```
